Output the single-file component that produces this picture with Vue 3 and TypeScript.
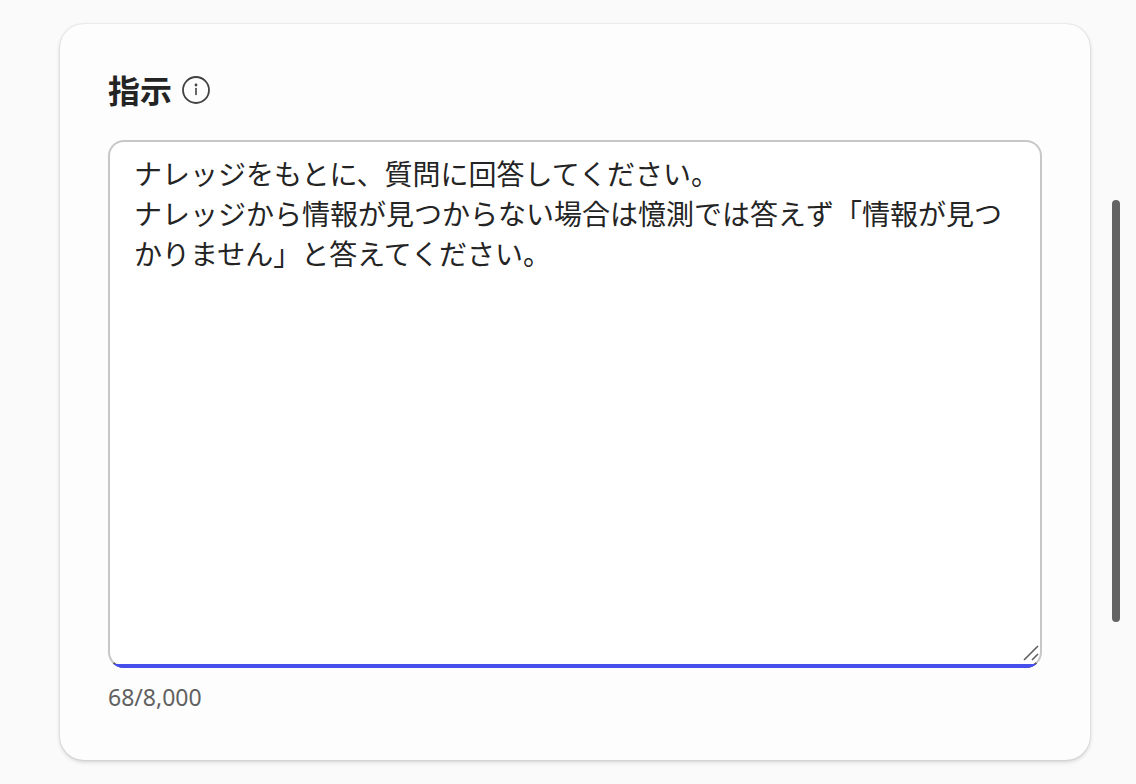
<script setup lang="ts">
import { computed, ref } from 'vue'

const limit = 8000
const instructions = ref<string>(
  'ナレッジをもとに、質問に回答してください。\nナレッジから情報が見つからない場合は憶測では答えず「情報が見つかりません」と答えてください。'
)
const counter = computed<string>(
  () => `${instructions.value.length}/${limit.toLocaleString('en-US')}`
)
</script>

<template>
  <div class="page">
    <main class="card">
      <div class="heading">
        <label class="title" for="instructions">指示</label>
        <button class="info" type="button" aria-label="指示の詳細">
          <svg viewBox="0 0 28 28" width="28" height="28" aria-hidden="true">
            <circle cx="14" cy="14" r="13" fill="none" stroke="currentColor" stroke-width="1.8" />
            <circle cx="14" cy="9" r="1.4" fill="currentColor" />
            <path d="M14 12.6V18.4" fill="none" stroke="currentColor" stroke-width="1.6" stroke-linecap="round" />
          </svg>
        </button>
      </div>
      <div class="field">
        <textarea
          id="instructions"
          v-model="instructions"
          class="input"
          :maxlength="limit"
          spellcheck="false"
          aria-describedby="counter"
        ></textarea>
        <svg class="grip" viewBox="0 0 16 16" width="16" height="16" aria-hidden="true">
          <path d="M1 15L15 1M9 15L15 9" fill="none" stroke="#616161" stroke-width="1.6" />
        </svg>
      </div>
      <div id="counter" class="counter">{{ counter }}</div>
    </main>
    <div class="track" aria-hidden="true">
      <div class="thumb"></div>
    </div>
  </div>
</template>

<style>
body {
  background: #fafafa;
}
</style>

<style scoped>
.page {
  display: flex;
  gap: 22px;
  box-sizing: border-box;
  min-height: 100vh;
  padding: 24px 16px 24px 60px;
  color: #242424;
  font-family: 'Noto Sans CJK JP', 'Noto Sans', sans-serif;
}

.card {
  display: flex;
  flex: 1;
  flex-direction: column;
  box-sizing: border-box;
  min-width: 0;
  padding: 44px 48px;
  border-radius: 24px;
  background: #fdfdfd;
  box-shadow: 0 0 2px rgba(0, 0, 0, 0.16), 0 2px 4px rgba(0, 0, 0, 0.16);
}

.heading {
  display: flex;
  align-items: center;
  gap: 10px;
  height: 44px;
  margin-bottom: 28px;
}

.title {
  height: 44px;
  font-size: 32px;
  font-weight: 700;
  line-height: 42px;
}

.info {
  display: flex;
  padding: 0;
  border: 0;
  background: none;
  color: #424242;
}

.field {
  position: relative;
  display: flex;
}

.field::after {
  content: '';
  position: absolute;
  right: 0;
  bottom: 0;
  left: 0;
  box-sizing: border-box;
  height: 16px;
  border-bottom: 4px solid #464feb;
  border-radius: 0 0 16px 16px;
  clip-path: inset(12px 0 0 0);
  pointer-events: none;
}

.input {
  flex: 1;
  box-sizing: border-box;
  min-width: 0;
  height: 528px;
  margin: 0;
  padding: 11px 24px;
  border: 2px solid #c7c7c7;
  border-bottom-color: #616161;
  border-radius: 16px;
  outline: none;
  background: #ffffff;
  color: #242424;
  font-family: 'Noto Sans CJK JP', 'Noto Sans', sans-serif;
  font-size: 28px;
  line-height: 40px;
  resize: none;
}

.grip {
  position: absolute;
  right: 3px;
  bottom: 7px;
  pointer-events: none;
}

.counter {
  margin-top: 13px;
  color: #616161;
  font-family: 'Noto Sans', sans-serif;
  font-size: 23px;
  line-height: 32px;
}

.track {
  width: 8px;
  padding-top: 176px;
}

.thumb {
  height: 422px;
  border-radius: 4px;
  background: #636363;
}
</style>
